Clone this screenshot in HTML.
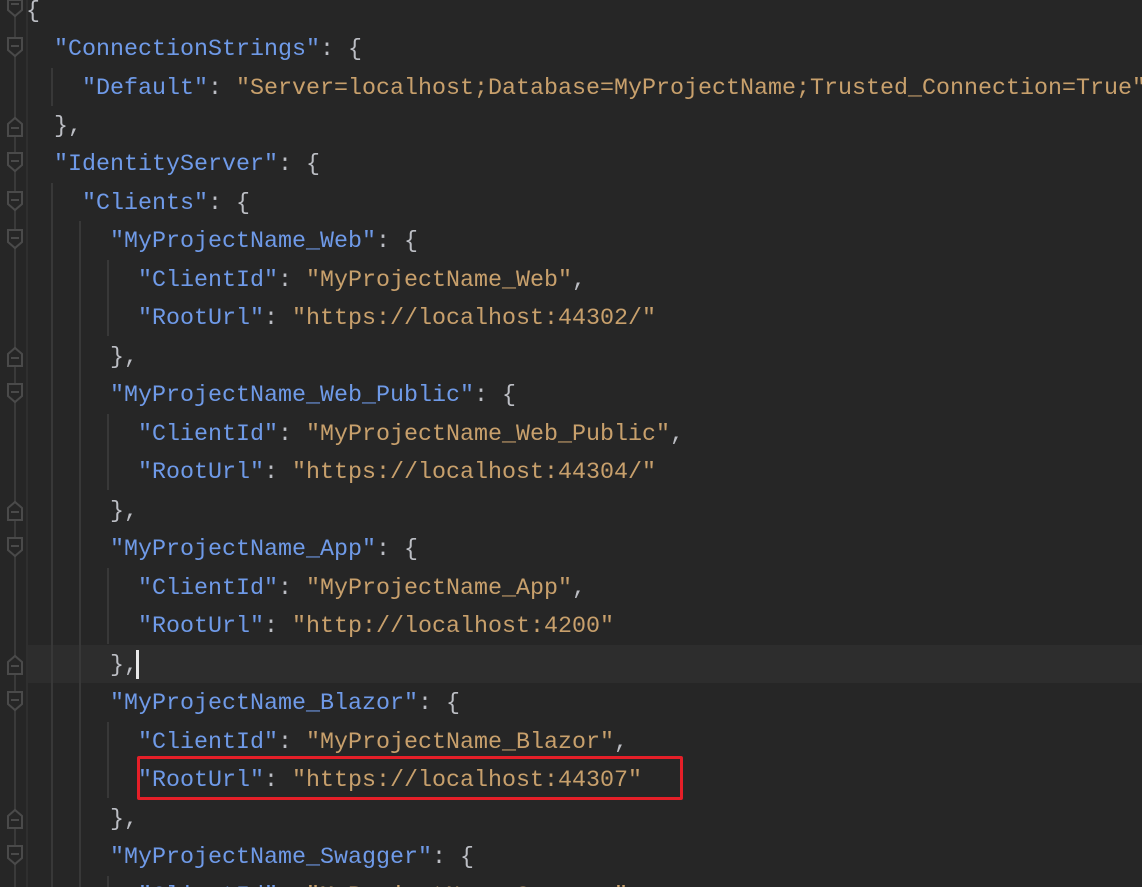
<!DOCTYPE html>
<html><head><meta charset="utf-8"><style>
html,body{margin:0;padding:0;width:1142px;height:887px;overflow:hidden;background:#262626;}
.wrap{position:relative;width:1142px;height:887px;}
.l{position:absolute;left:26px;height:38.4px;line-height:38.4px;font-family:"Liberation Mono",monospace;font-size:23.33px;color:#bcbec4;white-space:pre;margin-top:2px;}
.k{color:#6f9ae8}.s{color:#c8a06c}
.g{position:absolute;width:2px;background:#383838;}
.cur{position:absolute;left:27px;top:645px;width:1115px;height:38px;background:#2d2d2d;}
</style></head><body><div class="wrap">
<div class="cur"></div>
<div class="g" style="left:14px;top:0;height:887px;background:#3a3a3a"></div>
<div class="g" style="left:26px;top:0;height:887px;background:#2f2f2f"></div>
<div class="g" style="left:51px;top:68px;height:38px"></div>
<div class="g" style="left:51px;top:183px;height:704px"></div>
<div class="g" style="left:79px;top:221px;height:666px"></div>
<div class="g" style="left:107px;top:260px;height:76px"></div>
<div class="g" style="left:107px;top:414px;height:76px"></div>
<div class="g" style="left:107px;top:568px;height:76px"></div>
<div class="g" style="left:107px;top:722px;height:76px"></div>
<div class="g" style="left:107px;top:876px;height:11px"></div>
<svg width="30" height="887" style="position:absolute;left:0;top:0" fill="#262626" stroke="#4a4a4a" stroke-width="2">
<path d="M8 0h14v10l-7 6l-7-6z M11 4h8"/>
<path d="M8 38h14v12l-7 6l-7-6z M11 46h8"/>
<path d="M8 136h14v-12l-7-6l-7 6z M11 128h8"/>
<path d="M8 153h14v12l-7 6l-7-6z M11 161h8"/>
<path d="M8 192h14v12l-7 6l-7-6z M11 200h8"/>
<path d="M8 230h14v12l-7 6l-7-6z M11 238h8"/>
<path d="M8 366h14v-12l-7-6l-7 6z M11 358h8"/>
<path d="M8 384h14v12l-7 6l-7-6z M11 392h8"/>
<path d="M8 520h14v-12l-7-6l-7 6z M11 512h8"/>
<path d="M8 538h14v12l-7 6l-7-6z M11 546h8"/>
<path d="M8 674h14v-12l-7-6l-7 6z M11 666h8"/>
<path d="M8 692h14v12l-7 6l-7-6z M11 700h8"/>
<path d="M8 828h14v-12l-7-6l-7 6z M11 820h8"/>
<path d="M8 846h14v12l-7 6l-7-6z M11 854h8"/>
</svg>
<div class="l" style="top:-9px">{</div>
<div class="l" style="top:29px">  <span class="k">"ConnectionStrings"</span>: {</div>
<div class="l" style="top:68px">    <span class="k">"Default"</span>: <span class="s">"Server=localhost;Database=MyProjectName;Trusted_Connection=True"</span></div>
<div class="l" style="top:106px">  },</div>
<div class="l" style="top:144px">  <span class="k">"IdentityServer"</span>: {</div>
<div class="l" style="top:183px">    <span class="k">"Clients"</span>: {</div>
<div class="l" style="top:221px">      <span class="k">"MyProjectName_Web"</span>: {</div>
<div class="l" style="top:260px">        <span class="k">"ClientId"</span>: <span class="s">"MyProjectName_Web"</span>,</div>
<div class="l" style="top:298px">        <span class="k">"RootUrl"</span>: <span class="s">"https://localhost:44302/"</span></div>
<div class="l" style="top:337px">      },</div>
<div class="l" style="top:375px">      <span class="k">"MyProjectName_Web_Public"</span>: {</div>
<div class="l" style="top:414px">        <span class="k">"ClientId"</span>: <span class="s">"MyProjectName_Web_Public"</span>,</div>
<div class="l" style="top:452px">        <span class="k">"RootUrl"</span>: <span class="s">"https://localhost:44304/"</span></div>
<div class="l" style="top:491px">      },</div>
<div class="l" style="top:529px">      <span class="k">"MyProjectName_App"</span>: {</div>
<div class="l" style="top:568px">        <span class="k">"ClientId"</span>: <span class="s">"MyProjectName_App"</span>,</div>
<div class="l" style="top:606px">        <span class="k">"RootUrl"</span>: <span class="s">"http://localhost:4200"</span></div>
<div class="l" style="top:645px">      },</div>
<div style="position:absolute;left:136px;top:650px;width:3px;height:29px;background:#e8e8e8"></div>
<div class="l" style="top:683px">      <span class="k">"MyProjectName_Blazor"</span>: {</div>
<div class="l" style="top:722px">        <span class="k">"ClientId"</span>: <span class="s">"MyProjectName_Blazor"</span>,</div>
<div class="l" style="top:760px">        <span class="k">"RootUrl"</span>: <span class="s">"https://localhost:44307"</span></div>
<div class="l" style="top:799px">      },</div>
<div class="l" style="top:837px">      <span class="k">"MyProjectName_Swagger"</span>: {</div>
<div class="l" style="top:876px">        <span class="k">"ClientId"</span>: <span class="s">"MyProjectName_Swagger"</span>,</div>
<div style="position:absolute;left:137px;top:756px;width:540px;height:38px;border:3px solid #e51f28;border-radius:2px"></div>
</div></body></html>
